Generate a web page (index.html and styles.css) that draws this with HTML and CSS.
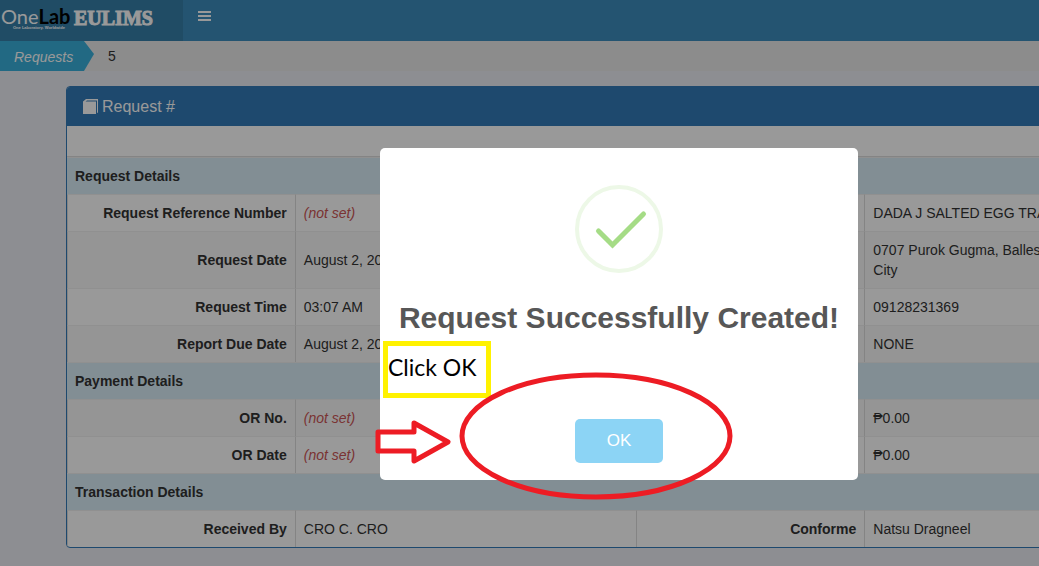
FILE: index.html
```html
<!DOCTYPE html>
<html lang="en">
<head>
<meta charset="utf-8">
<title>Request - EULIMS</title>
<link rel="stylesheet" href="styles.css">
</head>
<body>
<div class="page">
  <header class="topbar">
    <a class="brand" href="#">
      <span class="brand-lab"><span class="brand-name">One<b>Lab</b></span><span class="brand-tag">One Laboratory. Worldwide</span></span>
      <span class="brand-app">EULIMS</span>
    </a>
    <button class="menu" type="button" aria-label="Toggle navigation">
      <svg width="13" height="10" viewBox="0 0 13 10"><path d="M0 0h13v2H0zM0 4h13v2H0zM0 8h13v2H0z" fill="#fff"/></svg>
    </button>
  </header>
  <nav class="crumbs" aria-label="Breadcrumb">
    <a class="crumb" href="#">Requests</a>
    <svg class="crumb-tip" width="10" height="30" viewBox="0 0 10 30"><path d="M0 0L10 13L0 30z" fill="#3aafda"/></svg>
    <span class="crumb-current">5</span>
  </nav>
  <main class="content">
    <section class="panel">
      <h1 class="panel-heading">
        <svg width="16" height="16" viewBox="0 0 16 16"><path d="M0 2.500L3 0H15V13.500L14 14V1.500H4L2.500 2.500H13V15H0z" fill="#fff"/></svg>
        Request #
      </h1>
      <div class="panel-tools"></div>
      <table class="details">
        <colgroup><col class="label-col"><col class="value-col"><col class="label-col"><col class="value-col"></colgroup>
        <tbody>
          <tr class="group"><th colspan="4">Request Details</th></tr>
          <tr><th>Request Reference Number</th><td><em>(not set)</em></td><th></th><td>DADA J SALTED EGG TRA</td></tr>
          <tr class="alt"><th>Request Date</th><td>August 2, 20</td><th></th><td>0707 Purok Gugma, Balles<br>City</td></tr>
          <tr><th>Request Time</th><td>03:07 AM</td><th></th><td>09128231369</td></tr>
          <tr class="alt"><th>Report Due Date</th><td>August 2, 20</td><th></th><td>NONE</td></tr>
          <tr class="group"><th colspan="4">Payment Details</th></tr>
          <tr class="alt"><th>OR No.</th><td><em>(not set)</em></td><th></th><td>₱0.00</td></tr>
          <tr><th>OR Date</th><td><em>(not set)</em></td><th></th><td>₱0.00</td></tr>
          <tr class="group"><th colspan="4">Transaction Details</th></tr>
          <tr><th>Received By</th><td>CRO C. CRO</td><th>Conforme</th><td>Natsu Dragneel</td></tr>
        </tbody>
      </table>
    </section>
  </main>
  <div class="overlay">
    <div class="alert" role="dialog" aria-labelledby="alert-title">
      <svg class="success" width="88" height="88" viewBox="0 0 88 88" fill="none">
        <circle cx="44" cy="44" r="42" stroke="#edf8e7" stroke-width="4"/>
        <path d="M23.500 46L37.500 60L68.500 29" stroke="#a5dc86" stroke-width="5" stroke-linecap="round"/>
      </svg>
      <h2 class="alert-title" id="alert-title">Request Successfully Created!</h2>
      <button class="ok" type="button">OK</button>
      <div class="note">Click OK</div>
      <svg class="marks" viewBox="0 0 478 332" fill="none" stroke="#ed1c24" stroke-width="5" stroke-linejoin="round">
        <ellipse cx="216" cy="288" rx="134" ry="61"/>
        <path d="M-2 284H34V275L68 294L34 313V303H-2z"/>
      </svg>
    </div>
  </div>
</div>
</body>
</html>
```
FILE: styles.css
```css
* { box-sizing: border-box; }
html, body { height: 100%; }
body {
  margin: 0;
  overflow: hidden;
  background: #ecedf3;
  color: #333;
  font: 14px/20px "Liberation Sans", Arial, sans-serif;
}
.page { position: relative; min-width: 1238px; min-height: 100%; }

.topbar { display: flex; height: 41px; background: #3c8dbc; }
.brand {
  display: flex;
  gap: 4px;
  width: 183px;
  padding: 6px 1px;
  background: #367fa9;
  color: #fff;
  text-decoration: none;
}
.brand-lab { display: flex; flex-direction: column; width: 69px; }
.brand-name { font: 20px/20px Lato, sans-serif; }
.brand-name b { color: #000; font-weight: 700; }
.brand-tag { padding-left: 12px; font-size: 4px; line-height: 4px; font-weight: 700; white-space: nowrap; }
.brand-app { font: 700 20px/24px "Liberation Serif", serif; -webkit-text-stroke: 1px #fff; }
.menu { display: flex; padding: 11px 15px; border: 0; background: none; }

.crumbs { display: flex; height: 30px; background: #eaeaea; line-height: 32px; }
.crumb {
  width: 84px;
  padding-left: 14px;
  background: #3aafda;
  color: #fff;
  font-style: italic;
  text-decoration: none;
}
.crumb-current { padding-left: 14px; line-height: 30px; }

.content { padding: 15px 30px 18px 66px; }
.panel {
  width: 1141px;
  overflow: hidden;
  border: 1px solid #337ab7;
  border-radius: 4px;
  background: #fff;
}
.panel-heading {
  display: flex;
  align-items: center;
  gap: 3px;
  height: 39px;
  margin: 0;
  padding: 0 16px;
  background: #337ab7;
  color: #fff;
  font-size: 16px;
  font-weight: 400;
}
.panel-tools { height: 31px; border-bottom: 1px solid #ddd; }
.details { width: 100%; table-layout: fixed; border-spacing: 0; }
.label-col { width: 20%; }
.value-col { width: 30%; }
.details th, .details td {
  padding: 8px;
  border-top: 1px solid #f0f0f0;
  border-left: 1px solid #ddd;
  text-align: left;
}
.details th { text-align: right; }
.details .group th { border-left: 0; background: #d9edf7; text-align: left; }
.details .alt { background: #f9f9f9; }
.details em { color: #c55; }

.overlay {
  position: absolute;
  inset: 0;
  display: flex;
  align-items: flex-start;
  justify-content: center;
  padding-top: 148px;
  background: rgba(0, 0, 0, 0.4);
}
.alert {
  position: relative;
  display: flex;
  flex-direction: column;
  align-items: center;
  width: 478px;
  padding: 37px 17px 17px;
  border-radius: 5px;
  background: #fff;
}
.alert-title { margin: 25px 0 81px; color: #575757; font-size: 30px; line-height: 40px; white-space: nowrap; }
.ok {
  width: 88px;
  height: 44px;
  border: 0;
  border-radius: 5px;
  background: #8cd4f5;
  color: #fff;
  font: 17px/20px "Liberation Sans", Arial, sans-serif;
}
.note {
  position: absolute;
  left: 3px;
  top: 193px;
  width: 108px;
  height: 57px;
  padding-top: 6px;
  border: 5px solid #fff200;
  color: #000;
  font: 23px/30px Lato, sans-serif;
  white-space: nowrap;
}
.marks { position: absolute; inset: 0; overflow: visible; pointer-events: none; }
```
